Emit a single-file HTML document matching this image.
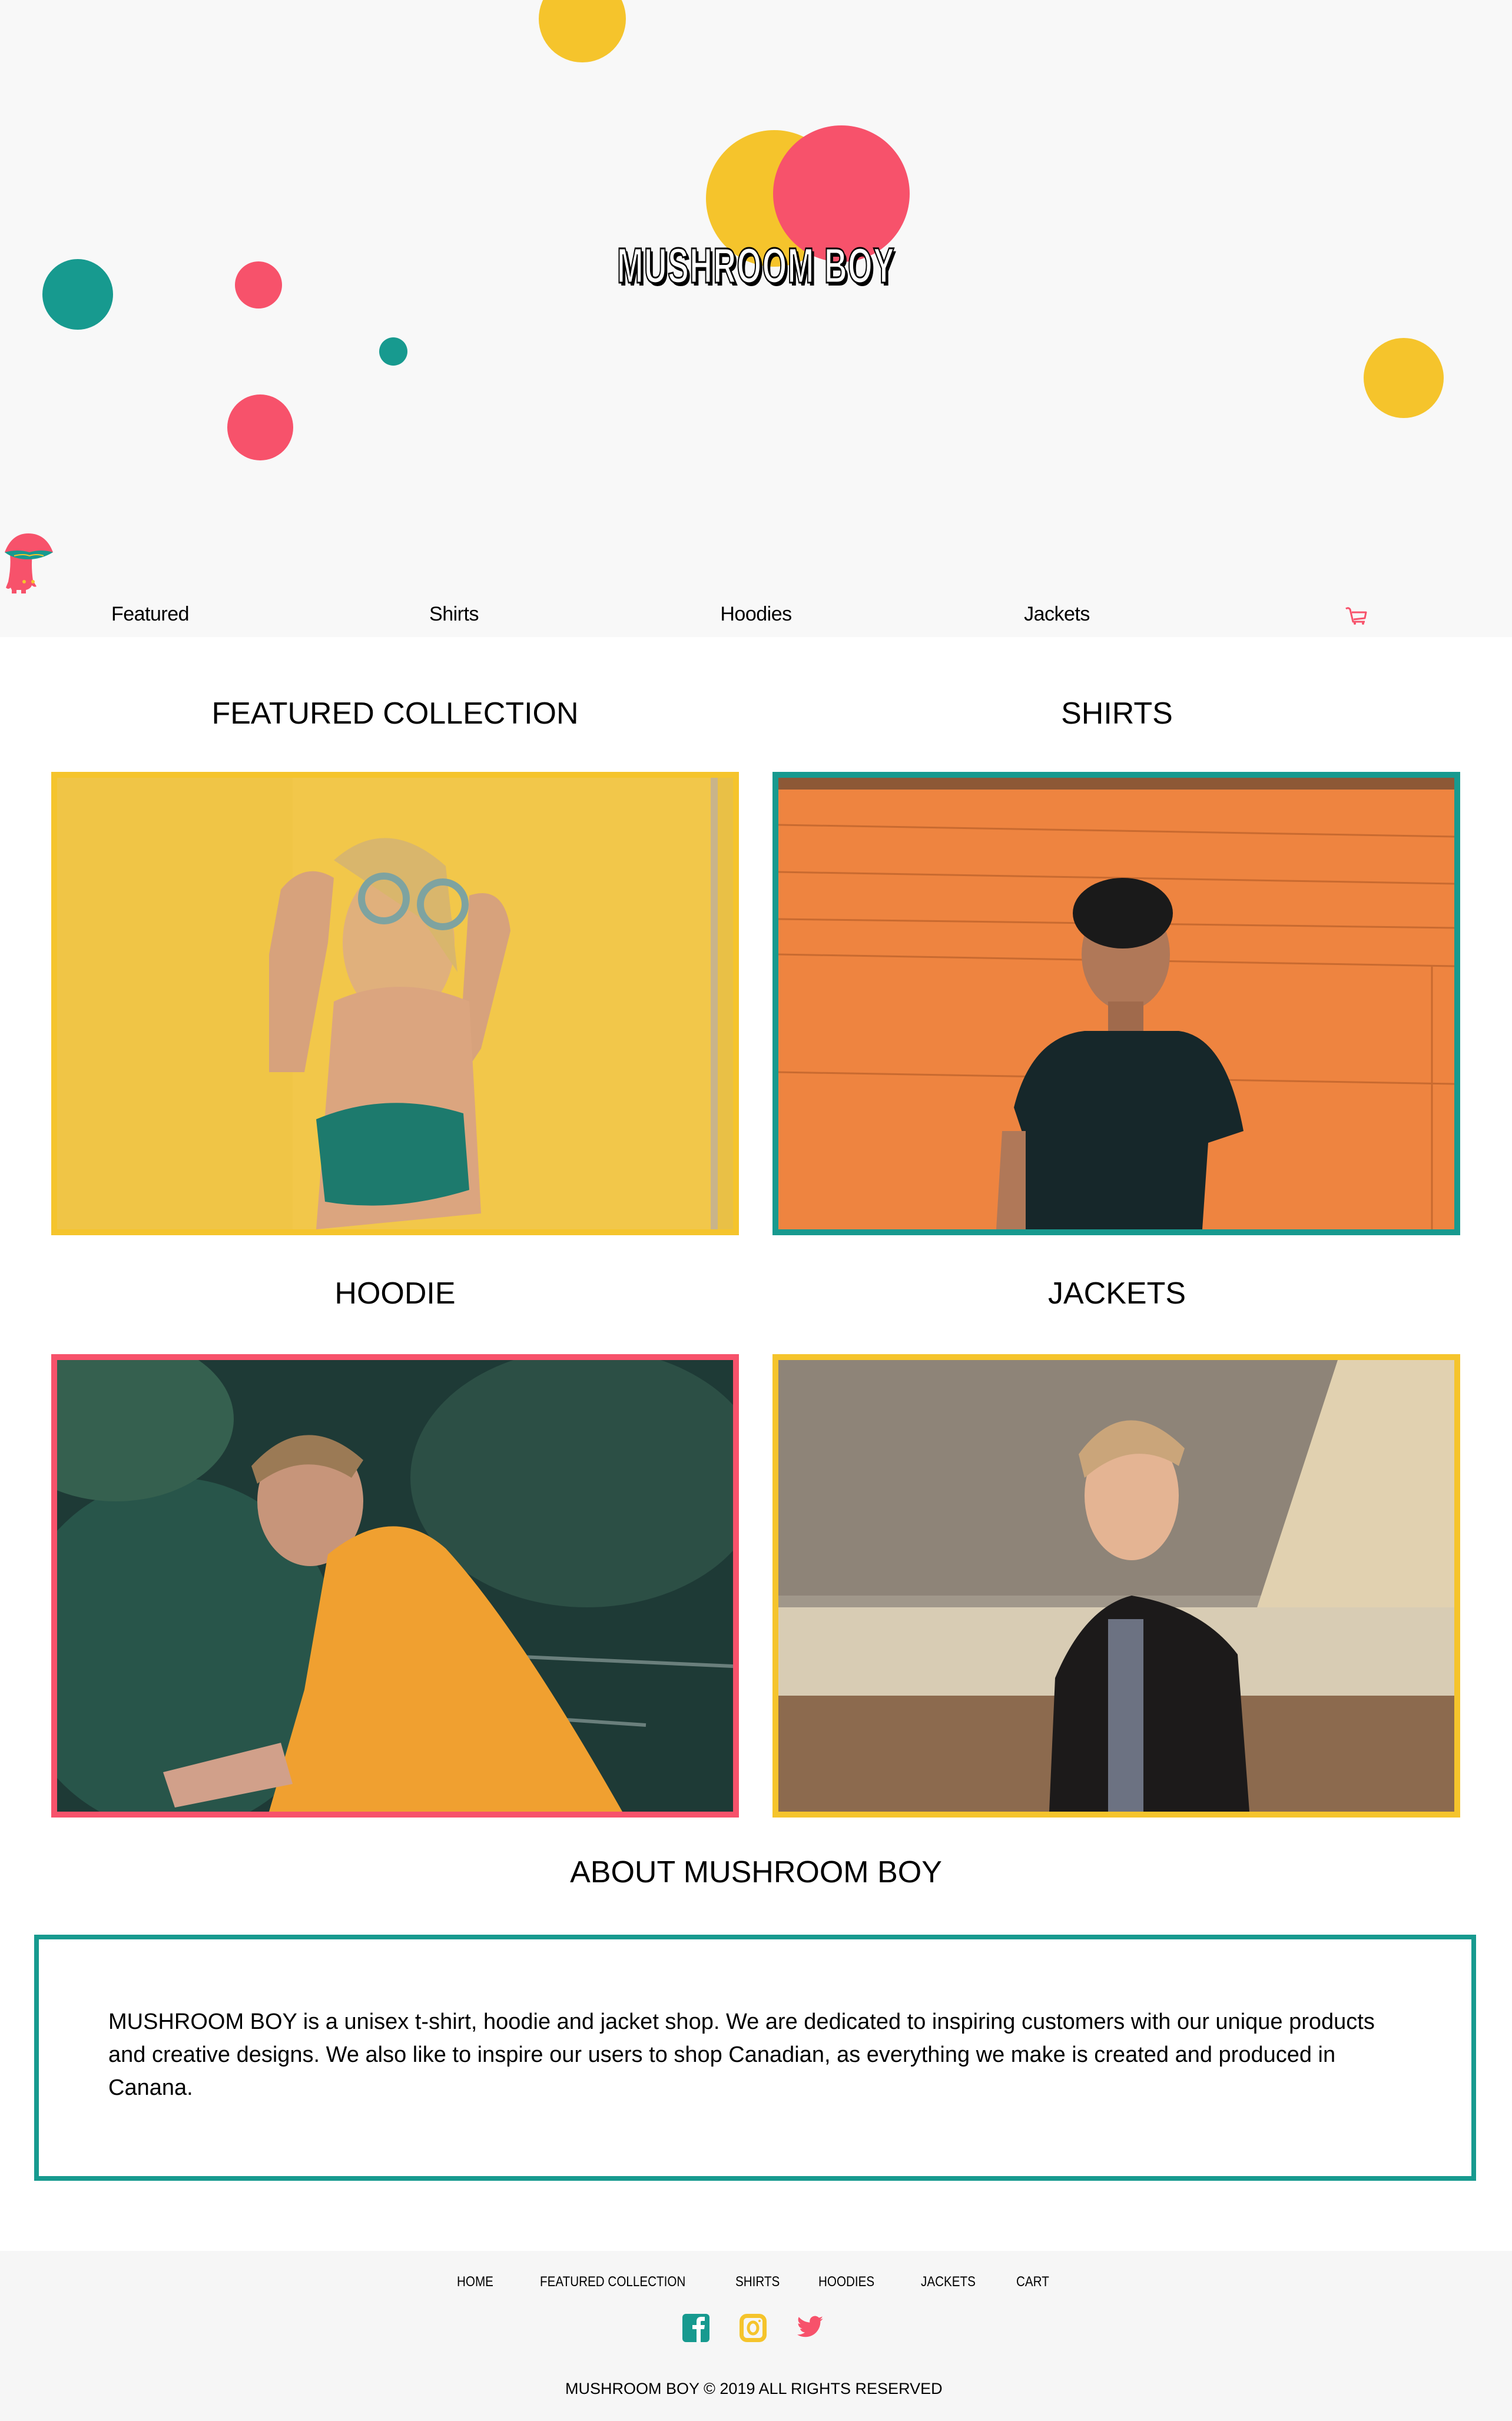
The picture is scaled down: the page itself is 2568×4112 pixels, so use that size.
<!DOCTYPE html>
<html><head><meta charset="utf-8">
<style>
*{margin:0;padding:0;box-sizing:border-box}
html,body{width:2568px;height:4112px;background:#fff;font-family:"Liberation Sans",sans-serif;color:#000;overflow:hidden}
.abs{position:absolute}
.c{position:absolute;border-radius:50%}
.y{background:#f5c42c}.p{background:#f7526b}.t{background:#179a8f}
header{position:absolute;left:0;top:0;width:2568px;height:1082px;background:#f8f8f8;overflow:hidden}
.nav{position:absolute;top:1024px;font-size:34px;transform:translateX(-50%);letter-spacing:-0.5px}
.h2{position:absolute;font-size:52px;transform:translateX(-50%);white-space:nowrap}
.box{position:absolute;width:1168px;height:787px;border:10px solid;overflow:hidden}
.box svg{display:block;width:1148px;height:767px}
footer{position:absolute;left:0;top:3823px;width:2568px;height:289px;background:#f6f6f6}
.fn{position:absolute;top:3862px;font-size:24px;white-space:nowrap;transform:scaleX(.86);transform-origin:left}
</style></head><body>
<header>
  <div class="c y" style="left:915px;top:-42px;width:148px;height:148px"></div>
  <div class="c y" style="left:1199px;top:221px;width:232px;height:232px"></div>
  <div class="c p" style="left:1313px;top:213px;width:232px;height:232px"></div>
  <div class="c t" style="left:72px;top:440px;width:120px;height:120px"></div>
  <div class="c p" style="left:399px;top:444px;width:80px;height:80px"></div>
  <div class="c t" style="left:644px;top:573px;width:48px;height:48px"></div>
  <div class="c p" style="left:386px;top:670px;width:112px;height:112px"></div>
  <div class="c y" style="left:2316px;top:574px;width:136px;height:136px"></div>
  <div class="abs" style="left:1284px;top:406px;white-space:nowrap;transform:translateX(-50%) scaleX(0.64)">
    <span style="display:block;font-family:'Liberation Sans Narrow','Liberation Sans',sans-serif;font-weight:bold;font-size:84px;line-height:90px;color:#fff;-webkit-text-stroke:3px #000;text-shadow:6px 5px 0 #000;letter-spacing:2px">MUSHROOM BOY</span>
  </div>
  <svg class="abs" style="left:0;top:898px" width="100" height="110" viewBox="0 0 100 110">
    <path d="M16 36 Q20 60 14 90 L10 100 Q14 104 18 100 L20 104 L20 112 L28 112 L28 104 L36 104 L36 112 L44 112 L44 104 Q52 102 54 96 Q58 100 62 98 L56 88 Q52 60 56 36 Z" fill="#f7526b"/>
    <path d="M8 40 Q20 8 48 8 Q78 8 90 40 Q48 56 8 40Z" fill="#f7526b"/>
    <path d="M8 40 Q30 34 50 40 Q70 34 90 40 Q70 52 48 52 Q24 52 8 40Z" fill="#179a8f"/>
    <path d="M24 46 Q40 42 50 46 Q62 42 74 46" stroke="#f5c42c" stroke-width="2" fill="none"/>
    <circle cx="41" cy="90" r="3" fill="#f5c42c"/><circle cx="56" cy="90" r="3" fill="#f5c42c"/>
  </svg>
  <div class="nav" style="left:255px">Featured</div>
  <div class="nav" style="left:771px">Shirts</div>
  <div class="nav" style="left:1284px">Hoodies</div>
  <div class="nav" style="left:1795px">Jackets</div>
  <svg class="abs" style="left:2284px;top:1030px" width="40" height="32" viewBox="0 0 40 32">
    <path d="M2 4 Q6 1 9 5 L14 26 L34 26 M12 10 L36 10 L34 20 L15 22" stroke="#f7526b" stroke-width="3" fill="none" stroke-linejoin="round"/>
    <circle cx="17" cy="29" r="2" fill="#f7526b"/><circle cx="31" cy="29" r="2" fill="#f7526b"/>
  </svg>
</header>

<div class="h2" style="left:671px;top:1182px">FEATURED COLLECTION</div>
<div class="h2" style="left:1897px;top:1182px">SHIRTS</div>

<div class="box" style="left:87px;top:1311px;border-color:#f5c42c">
<svg viewBox="0 0 1148 767"><rect width="1148" height="767" fill="#f2c74a"/>
<rect x="0" y="0" width="400" height="767" fill="#efc345" opacity=".6"/>
<rect x="1110" y="0" width="12" height="767" fill="#c9b48a"/>
<rect x="1122" y="0" width="26" height="767" fill="#e9c046"/>
<ellipse cx="580" cy="280" rx="95" ry="130" fill="#e0b07c"/>
<path d="M470 140 Q560 60 660 150 L680 330 L620 240 Z" fill="#d9b66c"/>
<circle cx="555" cy="205" r="38" fill="none" stroke="#7ea3a0" stroke-width="12"/>
<circle cx="655" cy="215" r="38" fill="none" stroke="#7ea3a0" stroke-width="12"/>
<path d="M380 190 Q420 140 470 170 L460 280 L420 500 L360 500 L360 300Z" fill="#d7a27c"/>
<path d="M700 200 Q760 180 770 260 L720 460 L680 520Z" fill="#d7a27c"/>
<path d="M470 380 Q580 330 700 380 L720 740 L440 767 Z" fill="#dba57f"/>
<path d="M440 580 Q560 530 690 570 L700 700 Q570 740 455 720Z" fill="#1d7a6d"/>
</svg></div>

<div class="box" style="left:1312px;top:1311px;border-color:#179a8f">
<svg viewBox="0 0 1148 767"><rect width="1148" height="767" fill="#ee8440"/>
<rect x="0" y="0" width="1148" height="20" fill="#2b2b2b" opacity=".5"/>
<g stroke="#c86a30" stroke-width="3"><line x1="0" y1="80" x2="1148" y2="100"/><line x1="0" y1="160" x2="1148" y2="180"/><line x1="0" y1="240" x2="1148" y2="255"/><line x1="0" y1="300" x2="1148" y2="320"/><line x1="0" y1="500" x2="1148" y2="520"/><line x1="1110" y1="320" x2="1110" y2="767"/></g>
<ellipse cx="590" cy="300" rx="75" ry="95" fill="#b07858"/>
<ellipse cx="585" cy="230" rx="85" ry="60" fill="#1a1a1a"/>
<rect x="560" y="380" width="60" height="60" fill="#a06a4c"/>
<path d="M400 560 Q430 440 520 430 L680 430 Q760 440 790 600 L730 620 L720 767 L420 767 L420 620 Z" fill="#16272a"/>
<path d="M380 600 L420 600 L420 767 L370 767Z" fill="#b07858"/>
</svg></div>

<div class="h2" style="left:671px;top:2167px">HOODIE</div>
<div class="h2" style="left:1897px;top:2167px">JACKETS</div>

<div class="box" style="left:87px;top:2300px;border-color:#f7526b">
<svg viewBox="0 0 1148 767"><rect width="1148" height="767" fill="#1e3a36"/>
<ellipse cx="200" cy="500" rx="280" ry="300" fill="#28554a"/>
<ellipse cx="900" cy="200" rx="300" ry="220" fill="#2c4f45"/>
<ellipse cx="100" cy="100" rx="200" ry="140" fill="#35604f"/>
<path d="M700 500 L1148 520 M700 600 L1000 620" stroke="#6a7f7c" stroke-width="6"/>
<ellipse cx="430" cy="240" rx="90" ry="110" fill="#c7957a"/>
<path d="M330 180 Q420 80 520 170 L500 200 Q420 150 340 210Z" fill="#9b7a55"/>
<path d="M460 330 Q570 240 660 320 Q780 450 960 767 L360 767 L420 560 Z" fill="#f0a030"/>
<path d="M180 700 L380 650 L400 720 L200 760Z" fill="#d1a08a"/>
</svg></div>

<div class="box" style="left:1312px;top:2300px;border-color:#f5c42c">
<svg viewBox="0 0 1148 767"><rect width="1148" height="767" fill="#a0978a"/>
<rect x="0" y="0" width="1148" height="400" fill="#8e8478"/>
<path d="M950 0 L1148 0 L1148 767 L700 767 Z" fill="#e1d1b0"/>
<rect x="0" y="420" width="1148" height="150" fill="#d8ccb4"/>
<rect x="0" y="570" width="1148" height="197" fill="#8c6a4e"/>
<ellipse cx="600" cy="230" rx="80" ry="110" fill="#e4b493"/>
<path d="M510 160 Q590 50 690 150 L680 180 Q600 130 520 200Z" fill="#caa57a"/>
<path d="M460 767 L470 540 Q520 420 600 400 Q720 420 780 500 L800 767 Z" fill="#1c1a1a"/>
<path d="M560 440 L620 440 L620 767 L560 767Z" fill="#6c7282"/>
</svg></div>

<div class="h2" style="left:1284px;top:3150px">ABOUT MUSHROOM BOY</div>

<div class="abs" style="left:58px;top:3286px;width:2449px;height:418px;border:8px solid #179a8f;background:#fff">
  <p style="position:absolute;left:118px;top:112px;width:2200px;font-size:38px;line-height:56px">MUSHROOM BOY is a unisex t-shirt, hoodie and jacket shop. We are dedicated to inspiring customers with our unique products and creative designs. We also like to inspire our users to shop Canadian, as everything we make is created and produced in Canana.</p>
</div>

<footer></footer>
<div class="fn" style="left:776px">HOME</div>
<div class="fn" style="left:917px">FEATURED COLLECTION</div>
<div class="fn" style="left:1249px">SHIRTS</div>
<div class="fn" style="left:1390px">HOODIES</div>
<div class="fn" style="left:1564px">JACKETS</div>
<div class="fn" style="left:1726px">CART</div>

<svg class="abs" style="left:1159px;top:3930px" width="46" height="48" viewBox="0 0 46 48">
<rect width="46" height="48" rx="6" fill="#179a8f"/>
<path d="M24 48 L24 26 L17 26 L17 19 L24 19 L24 13 Q24 5 32 5 L38 5 L38 12 L33 12 Q31 12 31 14 L31 19 L38 19 L37 26 L31 26 L31 48Z" fill="#fff"/>
</svg>
<svg class="abs" style="left:1256px;top:3930px" width="46" height="48" viewBox="0 0 46 48">
<rect x="3.5" y="3.5" width="39" height="41" rx="9" fill="none" stroke="#f5c42c" stroke-width="7"/>
<ellipse cx="23" cy="24" rx="8" ry="10" fill="none" stroke="#f5c42c" stroke-width="5"/>
<circle cx="34" cy="12" r="2" fill="#f5c42c"/>
</svg>
<svg class="abs" style="left:1352px;top:3933px" width="48" height="44" viewBox="0 0 24 22">
<path d="M23 2.5c-.8.4-1.7.6-2.6.7.9-.6 1.6-1.4 2-2.5-.9.5-1.900.9-2.900 1.1C18.6.9 17.4.3 16.1.3c-2.5 0-4.5 2-4.5 4.5 0 .4 0 .7.1 1C7.9 5.6 4.6 3.8 2.4 1.1c-.4.7-.6 1.4-.6 2.3 0 1.6.8 2.9 2 3.7-.7 0-1.4-.2-2-.6v.1c0 2.2 1.6 4 3.6 4.4-.4.1-.8.2-1.2.2-.3 0-.6 0-.8-.1.6 1.8 2.2 3.1 4.2 3.1-1.5 1.2-3.500 1.900-5.600 1.900H1c2 1.3 4.4 2 6.9 2 8.3 0 12.8-6.9 12.8-12.8v-.6c.9-.6 1.7-1.4 2.3-2.3z" fill="#f7526b"/>
</svg>

<div class="abs" style="left:960px;top:4042px;font-size:27px;white-space:nowrap">MUSHROOM BOY © 2019 ALL RIGHTS RESERVED</div>
</body></html>
